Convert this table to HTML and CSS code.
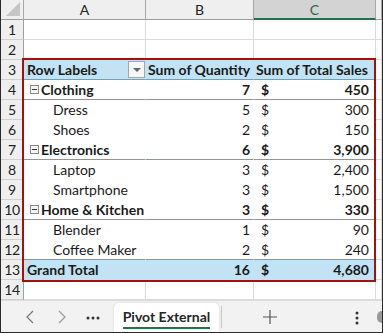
FILE: index.html
```html
<!DOCTYPE html>
<html>
<head>
    <title>Pivot External</title>
    <link rel="stylesheet" href="styles.css">
</head>
<body>
    <div class="window">
        <div class="sheet">
            <table class="grid">
                <colgroup>
                    <col class="col-rh">
                    <col class="col-a">
                    <col class="col-b">
                    <col class="col-c">
                    <col class="col-d">
                </colgroup>
                <tr class="col-heads">
                    <th class="corner"><span class="corner-tri"></span></th>
                    <th>A</th>
                    <th>B</th>
                    <th class="selected">C</th>
                    <th></th>
                </tr>
                <tr><th class="rh">1</th><td></td><td></td><td></td><td></td></tr>
                <tr><th class="rh">2</th><td></td><td></td><td></td><td></td></tr>
                <!-- pivot table -->
                <tr class="pv pv-head">
                    <th class="rh">3</th>
                    <td class="lbl">Row Labels <span class="filter-btn"></span></td>
                    <td class="num">Sum of Quantity</td>
                    <td class="num">Sum of Total Sales</td>
                    <td></td>
                </tr>
                <tr class="pv cat">
                    <th class="rh">4</th>
                    <td class="lbl"><span class="toggle"></span>Clothing</td>
                    <td class="num">7</td>
                    <td class="money"><span>$</span><span>450</span></td>
                    <td></td>
                </tr>
                <tr class="pv">
                    <th class="rh">5</th>
                    <td class="lbl item">Dress</td>
                    <td class="num">5</td>
                    <td class="money"><span>$</span><span>300</span></td>
                    <td></td>
                </tr>
                <tr class="pv">
                    <th class="rh">6</th>
                    <td class="lbl item">Shoes</td>
                    <td class="num">2</td>
                    <td class="money"><span>$</span><span>150</span></td>
                    <td></td>
                </tr>
                <tr class="pv cat">
                    <th class="rh">7</th>
                    <td class="lbl"><span class="toggle"></span>Electronics</td>
                    <td class="num">6</td>
                    <td class="money"><span>$</span><span>3,900</span></td>
                    <td></td>
                </tr>
                <tr class="pv">
                    <th class="rh">8</th>
                    <td class="lbl item">Laptop</td>
                    <td class="num">3</td>
                    <td class="money"><span>$</span><span>2,400</span></td>
                    <td></td>
                </tr>
                <tr class="pv">
                    <th class="rh">9</th>
                    <td class="lbl item">Smartphone</td>
                    <td class="num">3</td>
                    <td class="money"><span>$</span><span>1,500</span></td>
                    <td></td>
                </tr>
                <tr class="pv cat">
                    <th class="rh">10</th>
                    <td class="lbl"><span class="toggle"></span>Home &amp; Kitchen</td>
                    <td class="num">3</td>
                    <td class="money"><span>$</span><span>330</span></td>
                    <td></td>
                </tr>
                <tr class="pv">
                    <th class="rh">11</th>
                    <td class="lbl item">Blender</td>
                    <td class="num">1</td>
                    <td class="money"><span>$</span><span>90</span></td>
                    <td></td>
                </tr>
                <tr class="pv last-item">
                    <th class="rh">12</th>
                    <td class="lbl item">Coffee Maker</td>
                    <td class="num">2</td>
                    <td class="money"><span>$</span><span>240</span></td>
                    <td></td>
                </tr>
                <tr class="pv total">
                    <th class="rh">13</th>
                    <td class="lbl">Grand Total</td>
                    <td class="num">16</td>
                    <td class="money"><span>$</span><span>4,680</span></td>
                    <td></td>
                </tr>
                <tr><th class="rh">14</th><td></td><td></td><td></td><td></td></tr>
            </table>
            <!-- selection outline round the pivot -->
            <div class="pivot-outline"></div>
        </div>

        <div class="tab-bar">
            <span class="nav first">
                <svg width="8" height="14" viewBox="0 0 8 14"><path d="M7 1 L1 7 L7 13" fill="none" stroke="#777" stroke-width="1.2"/></svg>
            </span>
            <span class="nav">
                <svg width="8" height="14" viewBox="0 0 8 14"><path d="M1 1 L7 7 L1 13" fill="none" stroke="#999" stroke-width="1.2"/></svg>
            </span>
            <span class="nav more">
                <svg width="14" height="4" viewBox="0 0 14 4"><circle cx="2" cy="2" r="1.5" fill="#333"/><circle cx="7" cy="2" r="1.5" fill="#333"/><circle cx="12" cy="2" r="1.5" fill="#333"/></svg>
            </span>
            <div class="tab active"><span>Pivot External</span></div>
            <span class="tab-sep"></span>
            <span class="add">
                <svg width="14" height="14" viewBox="0 0 14 14"><path d="M7 0 V14 M0 7 H14" stroke="#555" stroke-width="1.2"/></svg>
            </span>
            <span class="kebab">
                <svg width="4" height="14" viewBox="0 0 4 14"><circle cx="2" cy="2" r="1.5" fill="#333"/><circle cx="2" cy="7" r="1.5" fill="#333"/><circle cx="2" cy="12" r="1.5" fill="#333"/></svg>
            </span>
            <span class="scroll-dot"></span>
        </div>
    </div>
</body>
</html>
```

FILE: styles.css
```css
* {
    box-sizing: border-box;
}
body {
    margin: 0;
    background: #fff;
    font-family: Lato, "Liberation Sans", Arial, sans-serif;
    color: #1a1a1a;
}
.window {
    width: 383px;
    height: 333px;
    border: 1px solid #2b2b2b;
    border-top: none;
    overflow: hidden;
}
.sheet {
    position: relative;
    height: 300px;
}
.grid {
    table-layout: fixed;
    border-collapse: separate;
    border-spacing: 0;
    width: 381px;
    font-size: 14px;
}
.col-rh { width: 23px; }
.col-a { width: 122px; }
.col-b { width: 108px; }
.col-c { width: 122px; }
.col-d { width: 6px; }

.grid th,
.grid td {
    height: 20px;
    padding: 0;
    border-right: 1px solid #dadada;
    border-bottom: 1px solid #dadada;
    white-space: nowrap;
    overflow: hidden;
}

/* column letters */
.col-heads th {
    background: #efefef;
    font-weight: normal;
    color: #222;
    border-right: 1px solid #a8a8a8;
    border-bottom: 1px solid #9e9e9e;
    text-align: center;
    font-size: 14px;
}
.col-heads th.selected {
    background: #d3d3d3;
    color: #1e6b3f;
    border-bottom: 2px solid #217346;
}
.corner {
    position: relative;
}
.corner-tri {
    position: absolute;
    right: 3px;
    bottom: 3px;
    width: 0;
    height: 0;
    border-left: 14px solid transparent;
    border-bottom: 14px solid #c6c6c6;
}

/* row numbers */
.grid th.rh {
    background: #efefef;
    font-weight: normal;
    color: #222;
    text-align: center;
    border-right: 1px solid #9e9e9e;
    border-bottom: 1px solid #d0d0d0;
    font-size: 14px;
    letter-spacing: -0.3px;
}

/* pivot body */
.pv td:nth-child(2),
.pv td:nth-child(3),
.pv td:nth-child(4) {
    border-right-color: #fff;
    border-bottom-color: #fff;
    vertical-align: bottom;
    line-height: 18px;
}
.pv td:nth-child(4) {
    border-right-color: #dadada;
}
.pv-head td:nth-child(2),
.pv-head td:nth-child(3),
.pv-head td:nth-child(4) {
    background: #c2e3f4;
    font-weight: bold;
    border-right-color: #c2e3f4;
    border-bottom-color: #5aa7d6;
}
.cat td:nth-child(2),
.cat td:nth-child(3),
.cat td:nth-child(4),
.last-item td:nth-child(2),
.last-item td:nth-child(3),
.last-item td:nth-child(4) {
    border-bottom-color: #5aa7d6;
}
.cat td,
.total td {
    font-weight: bold;
}
.total td:nth-child(2),
.total td:nth-child(3),
.total td:nth-child(4) {
    background: #c2e3f4;
    border-right-color: #c2e3f4;
    border-bottom-color: #c2e3f4;
}

.lbl {
    padding-left: 3px !important;
    position: relative;
}
.lbl.item {
    padding-left: 29px !important;
}
.num {
    text-align: right;
    padding-right: 3px !important;
}
.pv-head .num {
    text-align: left;
    padding-left: 2px !important;
}
.money span:first-child {
    float: left;
    margin-left: 7px;
}
.money span:last-child {
    float: right;
    margin-right: 6px;
}

.toggle {
    display: inline-block;
    width: 9px;
    height: 9px;
    border: 1px solid #8a8a8a;
    background: #f4f4f4;
    margin: 0 2px 0 3px;
    position: relative;
    top: -1px;
}
.toggle::after {
    content: "";
    position: absolute;
    left: 1px;
    right: 1px;
    top: 3px;
    height: 1px;
    background: #333;
}

.filter-btn {
    position: absolute;
    right: 0;
    top: 1px;
    width: 17px;
    height: 17px;
    border: 1px solid #a6a6a6;
    background: #f7f7f7;
}
.filter-btn::after {
    content: "";
    position: absolute;
    left: 4px;
    top: 6px;
    border-left: 4px solid transparent;
    border-right: 4px solid transparent;
    border-top: 4px solid #666;
}

.pivot-outline {
    position: absolute;
    left: 21px;
    top: 58px;
    width: 354px;
    height: 224px;
    border: 2px solid #a50f0f;
    pointer-events: none;
}

/* sheet tabs */
.tab-bar {
    height: 32px;
    background: #f2f2f2;
    border-top: 1px solid #dcdcdc;
    display: flex;
    align-items: center;
}
.nav {
    width: 32px;
    display: flex;
    justify-content: center;
    align-items: center;
    padding-top: 1px;
}
.nav.first {
    margin-left: 13px;
}
.nav.more {
    width: 30px;
    padding-top: 3px;
}
.nav svg {
    display: block;
}
.tab {
    margin-left: 6px;
    align-self: stretch;
    width: 105px;
    background: #fff;
    border-radius: 5px 5px 0 0;
    box-shadow: 0 0 2px rgba(0,0,0,0.15);
    display: flex;
    align-items: center;
    justify-content: center;
    margin-top: 2px;
}
.tab span {
    font-size: 14px;
    font-weight: bold;
    color: #262626;
    border-bottom: 2px solid #217346;
    padding-bottom: 2px;
    margin-top: 2px;
}
.tab-sep {
    width: 1px;
    height: 22px;
    background: #c8c8c8;
    margin-left: 2px;
}
.add {
    width: 96px;
    display: flex;
    justify-content: center;
    padding-top: 1px;
}
.add svg,
.kebab svg {
    display: block;
}
.kebab {
    margin-left: 29px;
    width: 20px;
    display: flex;
    justify-content: center;
    padding-top: 2px;
}
.scroll-dot {
    margin-left: auto;
    width: 5px;
    height: 12px;
    border-radius: 6px 0 0 6px;
    background: #9a9a9a;
}
```
